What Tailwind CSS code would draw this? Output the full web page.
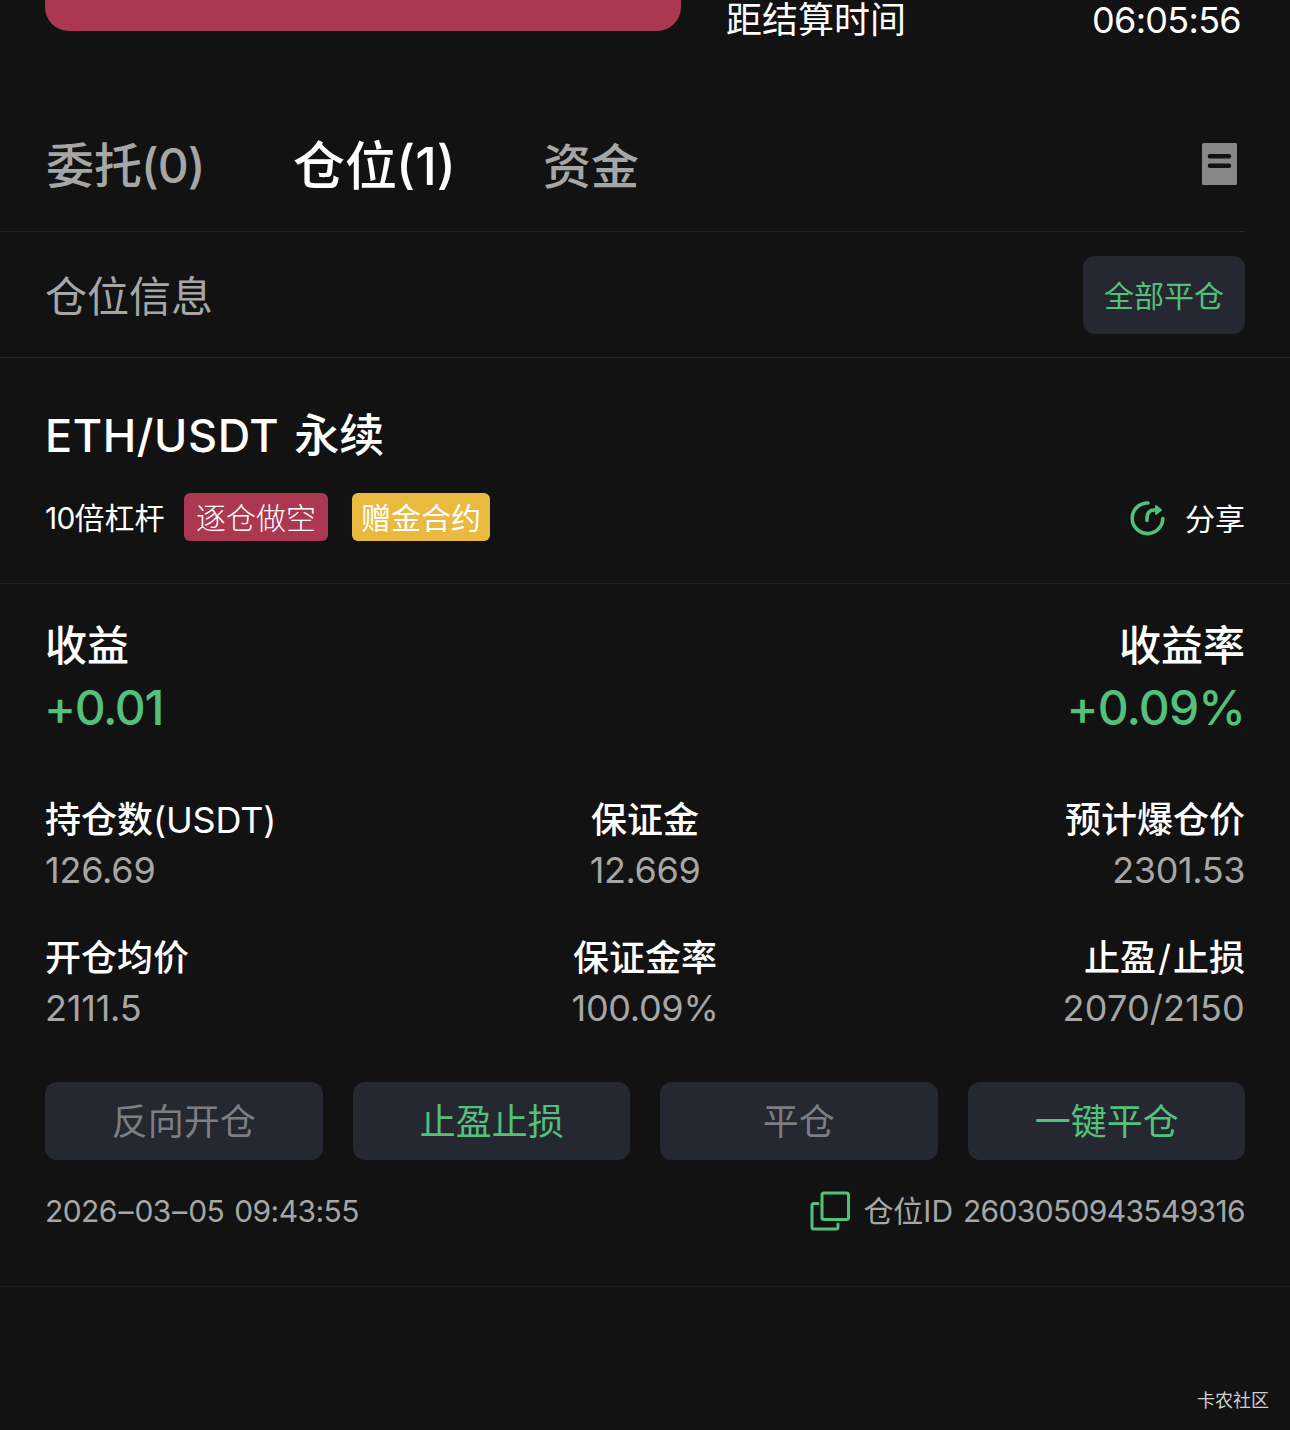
<!DOCTYPE html>
<html lang="zh-CN">
<head>
    <meta charset="UTF-8">
    <meta name="viewport" content="width=device-width, initial-scale=1.0">
    <title>ETH/USDT 永续</title>
    <script src="https://cdn.jsdelivr.net/npm/@tailwindcss/browser@4"></script>
</head>
<body class="bg-[#121212] h-[1430px] overflow-hidden text-white font-['Inter','Noto_Sans_CJK_SC',sans-serif]">
    <!-- 下单区底部 -->
    <div class="flex h-[100px] pl-[45px] pr-[49px]">
        <div class="w-[636px] h-[31px] bg-[#ab3751] rounded-b-3xl"></div>
        <div class="flex flex-1 justify-between pl-[45px] h-10 leading-10 text-[36px]">
            <span>距结算时间</span>
            <span class="tracking-[-0.7px]">06:05:56</span>
        </div>
    </div>

    <!-- 标签栏 -->
    <div class="flex items-center h-[132px] mr-[45px] pl-[46px] border-b border-[#252525] font-medium text-[48px] text-[#a6a6a6]">
        <span class="w-[247px] pt-px">委托<span class="tracking-[-1px] -ml-px">(0)</span></span>
        <span class="w-[250px] pt-0.5 text-[52px] text-white">仓位<span class="-ml-px">(1)</span></span>
        <span class="pt-0.5">资金</span>
        <svg class="ml-auto mr-2 mb-[3px] w-[35px] h-[42px]" viewBox="0 0 35 42">
            <rect width="35" height="42" rx="1.5" fill="#878787"/>
            <path d="M8 13.2H27M8 22.7H27" stroke="#121212" stroke-width="4.6" stroke-linecap="round"/>
        </svg>
    </div>

    <div class="flex items-center justify-between h-[126px] px-[45px] border-b border-[#252525]">
        <span class="pt-1 text-[42px] text-[#a6a6a6]">仓位信息</span>
        <button class="w-[162px] h-[78px] pt-1 rounded-xl bg-[#252831] text-[30px] text-[#53c07c]">全部平仓</button>
    </div>

    <!-- 合约信息 -->
    <div class="h-[226px] px-[45px] pt-[46px] border-b border-[#252525]">
        <h1 class="h-16 leading-16 text-[45px] font-medium"><span class="tracking-[0.6px]">ETH/USDT</span><span class="ml-[3px]"> 永续</span></h1>
        <div class="flex items-center mt-[25px] h-12 text-[30px] leading-12">
            <span class="w-[139px] pt-px"><span class="tracking-[-0.8px]">10</span>倍杠杆</span>
            <span class="w-36 h-12 leading-[50px] text-center rounded-md bg-[#ab3751] font-light">逐仓做空</span>
            <span class="ml-6 w-[138px] h-12 leading-[50px] text-center rounded-md bg-[#eab93f]">赠金合约</span>
            <svg class="ml-auto mr-5 mt-0.5 w-9 h-9" viewBox="0 0 36 36" fill="none" stroke="#53c07c" stroke-width="3.6" stroke-linecap="round" stroke-linejoin="round">
                <path d="M19 3A15.3 15.3 0 1 0 33.8 18.5"/>
                <path d="M18 20.500V18Q18 10.500 25 10H27"/>
                <path d="M27 6L32 10L27 14Z" fill="#53c07c" stroke-width="1.800"/>
            </svg>
            <span class="pt-[3px]">分享</span>
        </div>
    </div>

    <div class="flex justify-between px-[45px] pt-[31px] h-[206px] font-medium">
        <div>
            <div class="h-[61px] leading-[62px] text-[42px]">收益</div>
            <div class="h-16 leading-[63px] text-[48px] tracking-[-1.4px] text-[#53c07c] -ml-px">+0.01</div>
        </div>
        <div class="text-right">
            <div class="h-[61px] leading-[62px] text-[42px]">收益率</div>
            <div class="h-16 leading-[63px] text-[48px] tracking-[-0.9px] text-[#53c07c]">+0.09%</div>
        </div>
    </div>

    <!-- 仓位数据 -->
    <div class="grid grid-cols-3 gap-y-[38px] px-[45px] h-[292px] content-start pt-[5px] text-[36px] leading-[50px]">
        <div>
            <div class="font-medium">持仓数<span class="font-normal tracking-[-0.2px]">(USDT)</span></div>
            <div class="tracking-[-0.2px] text-[#a6a6a6]">126.69</div>
        </div>
        <div class="text-center">
            <div class="font-medium">保证金</div>
            <div class="tracking-[-0.4px] text-[#a6a6a6]">12.669</div>
        </div>
        <div class="text-right">
            <div class="font-medium">预计爆仓价</div>
            <div class="tracking-[-0.4px] text-[#a6a6a6]">2301.53</div>
        </div>
        <div>
            <div class="font-medium">开仓均价</div>
            <div class="tracking-[-0.2px] text-[#a6a6a6]">2111.5</div>
        </div>
        <div class="text-center">
            <div class="font-medium">保证金率</div>
            <div class="tracking-[-0.3px] text-[#a6a6a6]">100.09%</div>
        </div>
        <div class="text-right">
            <div class="font-medium">止盈<span class="px-0.5 font-normal">/</span>止损</div>
            <div class="tracking-[0.2px] text-[#a6a6a6]">2070/2150</div>
        </div>
    </div>

    <div class="grid grid-cols-4 gap-[30px] px-[45px] text-[36px]">
        <button class="h-[78px] pt-0.5 rounded-xl bg-[#252831] text-[#7d7e81]">反向开仓</button>
        <button class="h-[78px] pt-0.5 pl-px rounded-xl bg-[#252831] text-[#53c07c]">止盈止损</button>
        <button class="h-[78px] pt-0.5 rounded-xl bg-[#252831] text-[#7d7e81]">平仓</button>
        <button class="h-[78px] pt-0.5 pl-px rounded-xl bg-[#252831] text-[#53c07c]">一键平仓</button>
    </div>

    <div class="flex items-center h-[127px] px-[45px] pb-6 border-b border-[#1c1d20] text-[30px] text-[#a6a6a6]">
        <span class="tracking-[-0.55px]">2026<span class="px-[1.5px]">–</span>03<span class="px-[1.5px]">–</span>05<span class="ml-0.5"> 09:43:55</span></span>
        <svg class="ml-auto mr-[13px] w-10 h-10" viewBox="0 0 40 40" fill="none" stroke="#53c07c" stroke-width="3" stroke-linecap="round" stroke-linejoin="round">
            <rect x="12" y="2" width="26.500" height="26.500" rx="2"/>
            <path d="M8 12.500H4Q2 12.500 2 14.500V36Q2 38 4 38H26Q28 38 28 36V33"/>
        </svg>
        <span>仓位ID<span class="ml-0.5 tracking-[-0.65px]"> 2603050943549316</span></span>
    </div>

    <div class="pt-[100px] pr-[21px] text-right text-[18px] leading-7 text-[#cfcfcf]">卡农社区</div>
</body>
</html>
